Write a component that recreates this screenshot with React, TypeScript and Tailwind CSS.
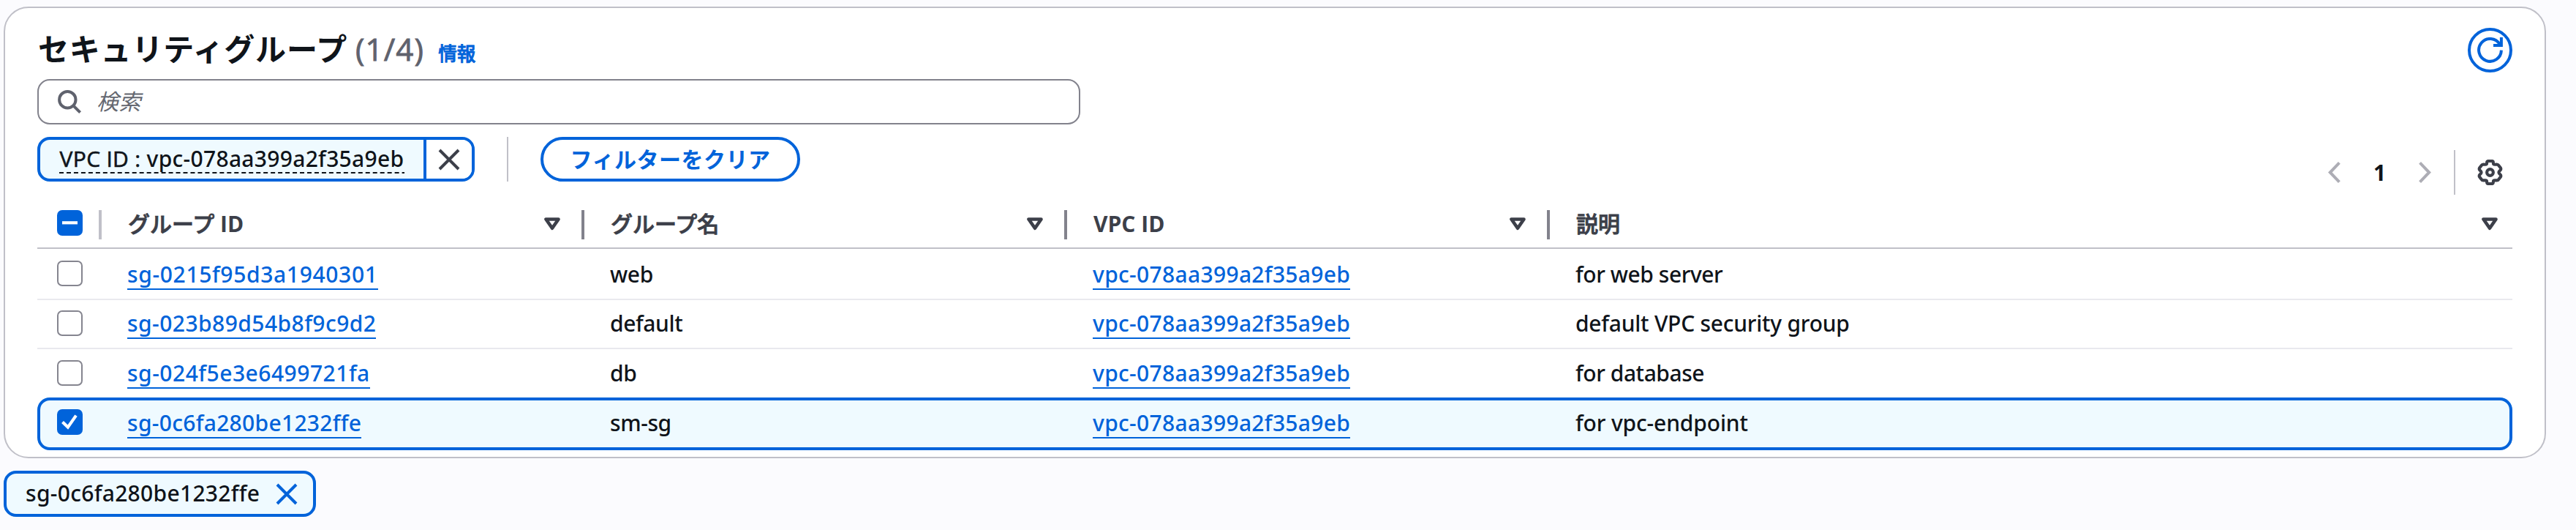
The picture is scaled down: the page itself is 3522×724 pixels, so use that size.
import type { ReactNode } from "react";

type Row = {
  id: string;
  idTracking: string;
  name: string;
  desc: string;
  descTracking: string;
  row: string;
  text: string;
  selected?: boolean;
};

const rows: Row[] = [
  {
    id: "sg-0215f95d3a1940301",
    idTracking: "tracking-[0.65px]",
    name: "web",
    desc: "for web server",
    descTracking: "tracking-[-0.45px]",
    row: "h-[70px] border-b-2 border-[#e9e9ee] pt-4",
    text: "mt-0",
  },
  {
    id: "sg-023b89d54b8f9c9d2",
    idTracking: "tracking-[0.45px]",
    name: "default",
    desc: "default VPC security group",
    descTracking: "tracking-[-0.25px]",
    row: "h-[67px] border-b-2 border-[#e9e9ee] pt-3.5",
    text: "-mt-px",
  },
  {
    id: "sg-024f5e3e6499721fa",
    idTracking: "tracking-[0.5px]",
    name: "db",
    desc: "for database",
    descTracking: "tracking-[-0.45px]",
    row: "h-[66px] pt-[15px]",
    text: "-mt-px",
  },
  {
    id: "sg-0c6fa280be1232ffe",
    idTracking: "tracking-[0.3px]",
    name: "sm-sg",
    desc: "for vpc-endpoint",
    descTracking: "tracking-[-0.15px]",
    row: "h-[72px] pt-4 rounded-[17px] bg-[#effaff] inset-ring-4 inset-ring-[#0063da]",
    text: "mt-0",
    selected: true,
  },
];

function SearchIcon() {
  return (
    <svg className="h-8 w-8 shrink-0" viewBox="0 0 32 32" fill="none" stroke="#5f626d" strokeWidth="4">
      <circle cx="13.3" cy="13.2" r="11.2" />
      <path d="M20.8 20.8 30.6 30.6" />
    </svg>
  );
}

function CloseIcon({ color }: { color: string }) {
  return (
    <svg className="h-[30px] w-[30px] shrink-0" viewBox="0 0 30 30" fill="none" stroke={color} strokeWidth="4">
      <path d="M2 2 28 28M28 2 2 28" />
    </svg>
  );
}

function RefreshIcon() {
  return (
    <svg className="h-[35px] w-[35px]" viewBox="0 0 35 35" fill="none" stroke="#0063da" strokeWidth="4">
      <path d="M32.9 17.6A15.4 15.4 0 1 1 30.8 9.6" />
      <path d="M32.9 0V11H22" />
    </svg>
  );
}

function GearIcon() {
  return (
    <svg className="h-[35px] w-[35px]" viewBox="0 0 16 16" fill="none" stroke="#3c3f49" strokeWidth="1.9">
      <path d="M7 .9H9Q10 .9 10 1.9V2.2Q10 3.1 11 3.1L12.2 3Q13 3 13.4 3.7L14.6 5.2Q15 6 14.4 6.6L13.8 7.2Q13.2 8 13.8 8.8L14.4 9.4Q15 10 14.6 10.8L13.4 12.3Q13 13 12.2 13L11 12.9Q10 12.9 10 13.8V14.1Q10 15.1 9 15.1H7Q6 15.1 6 14.1V13.8Q6 12.9 5 12.9L3.8 13Q3 13 2.6 12.3L1.4 10.8Q1 10 1.6 9.4L2.2 8.8Q2.8 8 2.2 7.2L1.6 6.6Q1 6 1.4 5.2L2.6 3.7Q3 3 3.8 3L5 3.1Q6 3.1 6 2.2V1.9Q6 .9 7 .9Z" />
      <circle cx="8" cy="8" r="2" />
    </svg>
  );
}

function Chevron({ d }: { d: string }) {
  return (
    <svg className="h-[29px] w-[17px]" viewBox="0 0 17 29" fill="none" stroke="#adadb5" strokeWidth="4">
      <path d={d} />
    </svg>
  );
}

function SortIcon() {
  return (
    <svg
      className="mt-2.5 h-[18px] w-[22px] shrink-0"
      viewBox="0 0 22 18"
      fill="none"
      stroke="#3c3f49"
      strokeWidth="4.6"
      strokeLinejoin="round"
    >
      <path d="M2.5 2.5H19.5L11 14.8Z" />
    </svg>
  );
}

function Checkbox({ state }: { state: "on" | "off" | "mixed" }) {
  if (state === "off") {
    return <span className="h-[35px] w-[35px] shrink-0 rounded-[7px] border-2 border-[#85858f] bg-white" />;
  }
  return (
    <span className="h-[35px] w-[35px] shrink-0 rounded-[7px] bg-[#0063da]">
      <svg className="h-[35px] w-[35px]" viewBox="0 0 35 35" fill="none" stroke="#fff" strokeWidth="4.2">
        <path d={state === "on" ? "M7.5 17.6 14.8 24.6 26 8.6" : "M7 17.3H28"} />
      </svg>
    </span>
  );
}

function HeadCell({ children, last }: { children: ReactNode; last?: boolean }) {
  return (
    <div
      className={
        last
          ? "flex flex-1 items-start justify-between pr-5"
          : "flex w-[660px] shrink-0 items-start justify-between"
      }
    >
      <span className="-mt-px whitespace-nowrap text-[30px] leading-10 font-medium text-[#3c3f49] [-webkit-text-stroke:0.9px_#3c3f49]">
        {children}
      </span>
      {last ? (
        <SortIcon />
      ) : (
        <span className="flex gap-[29px] pr-9">
          <SortIcon />
          <span className="h-10 w-1 bg-[#82828c]" />
        </span>
      )}
    </div>
  );
}

function HeadLatin({ children }: { children: ReactNode }) {
  return <span className="font-['Open_Sans'] font-bold [-webkit-text-stroke:0]">{children}</span>;
}

function Link({ children, tracking }: { children: ReactNode; tracking: string }) {
  return (
    <a className={`inline-block h-10 border-b-2 border-[#0063da] text-[#0063da] ${tracking}`}>{children}</a>
  );
}

export default function App() {
  return (
    <div className="h-[724px] w-[3522px] overflow-hidden bg-[#fbfbfe] pt-[9px] pl-[5px] font-['Noto_Sans','Noto_Sans_CJK_JP',sans-serif] font-medium text-[#0f141a]">
      <section className="h-[617px] w-[3476px] rounded-[34px] border-2 border-[#c0c0c8] bg-white pr-11 pl-11">
        <header className="flex h-[97px] items-start justify-between pt-[26px]">
          <div className="flex items-baseline whitespace-nowrap">
            <h2 className="ml-px text-[42px] leading-[60px] font-bold tracking-[0.8px]">セキュリティグループ</h2>
            <span className="ml-[11px] font-['Open_Sans'] text-[42px] leading-[60px] tracking-[1.2px] text-[#5f626d] [-webkit-text-stroke:0.9px_#5f626d]">
              (1/4)
            </span>
            <a className="ml-[19px] text-[25.6px] leading-9 text-[#0063da] [-webkit-text-stroke:0.8px_#0063da]">
              情報
            </a>
          </div>
          <button className="mt-px flex h-[61px] w-[61px] items-center justify-center rounded-full border-4 border-[#0063da]">
            <RefreshIcon />
          </button>
        </header>

        <div className="flex h-[168px] items-start justify-between">
          <div className="flex flex-col gap-[17px]">
            <div className="flex h-[62px] w-[1426px] items-center gap-[21px] rounded-[17px] border-2 border-[#82828c] pl-[26px]">
              <SearchIcon />
              <span className="text-[30px] leading-10 font-normal tracking-[0.5px] text-[#656871] italic">検索</span>
            </div>
            <div className="flex h-[61px] items-center">
              <div className="flex h-[61px] w-[598px] items-center rounded-[17px] border-4 border-[#0063da] bg-[#effaff]">
                <div className="flex h-full w-[524px] shrink-0 justify-center pt-[7px]">
                  <span className="relative flex h-[39px] w-[472px] items-start justify-center">
                    <span className="whitespace-nowrap font-['Open_Sans'] text-[30px] leading-[38px] tracking-[0.3px]">
                      <span className="[-webkit-text-stroke:0.6px_#0f141a]">VPC ID : </span>
                      <span className="font-['Noto_Sans']">vpc-078aa399a2f35a9eb</span>
                    </span>
                    <svg className="absolute bottom-0 left-0 h-0.5 w-[472px]" viewBox="0 0 472 2">
                      <path d="M0 1H472" stroke="#0f141a" strokeWidth="2" strokeDasharray="6 3.97" />
                    </svg>
                  </span>
                </div>
                <button className="flex h-full flex-1 items-center justify-center rounded-r-[13px] border-l-4 border-[#0063da] bg-white">
                  <CloseIcon color="#3c3f49" />
                </button>
              </div>
              <span className="ml-11 h-[61px] w-0.5 bg-[#c0c0c8]" />
              <button className="ml-11 flex h-[61px] w-[355px] items-center justify-center rounded-full border-4 border-[#0063da] text-[30px] leading-10 font-bold tracking-[0.5px] whitespace-nowrap text-[#0063da]">
                フィルターをクリア
              </button>
            </div>
          </div>

          <div className="mt-[97px] flex h-[61px] items-center pr-[13px]">
            <Chevron d="M15.4 1.4 2.8 14.5 15.4 27.6" />
            <span className="w-[107px] text-center text-[30px] leading-10 font-bold">1</span>
            <Chevron d="M1.6 1.4 14.2 14.5 1.6 27.6" />
            <span className="mr-[30px] ml-[31px] h-[61px] w-0.5 bg-[#c0c0c8]" />
            <GearIcon />
          </div>
        </div>

        <div className="flex h-16 items-start border-b-2 border-[#c0c0c8] pt-[11px] pl-[27px]">
          <Checkbox state="mixed" />
          <span className="mr-[36px] ml-[22px] h-10 w-1 bg-[#c0c0c8]" />
          <HeadCell>
            グループ <HeadLatin>ID</HeadLatin>
          </HeadCell>
          <HeadCell>グループ名</HeadCell>
          <HeadCell>
            <HeadLatin>VPC ID</HeadLatin>
          </HeadCell>
          <HeadCell last>説明</HeadCell>
        </div>

        {rows.map((r) => (
          <div key={r.id} className={`flex items-start pl-[27px] ${r.row}`}>
            <Checkbox state={r.selected ? "on" : "off"} />
            <div className={`ml-[61px] flex text-[30px] leading-[37px] whitespace-nowrap ${r.text}`}>
              <div className="w-[660px]">
                <Link tracking={r.idTracking}>{r.id}</Link>
              </div>
              <div className="w-[660px] tracking-[-0.4px]">{r.name}</div>
              <div className="w-[660px]">
                <Link tracking="tracking-[0.32px]">vpc-078aa399a2f35a9eb</Link>
              </div>
              <div className={r.descTracking}>{r.desc}</div>
            </div>
          </div>
        ))}
      </section>

      <div className="mt-[17px] flex h-[63px] w-[427px] items-center justify-between rounded-[17px] border-4 border-[#0063da] bg-[#effaff] pr-[21px] pl-[26px]">
        <span className="-mt-0.5 text-[30px] leading-10 tracking-[0.3px]">sg-0c6fa280be1232ffe</span>
        <CloseIcon color="#0063da" />
      </div>
    </div>
  );
}
